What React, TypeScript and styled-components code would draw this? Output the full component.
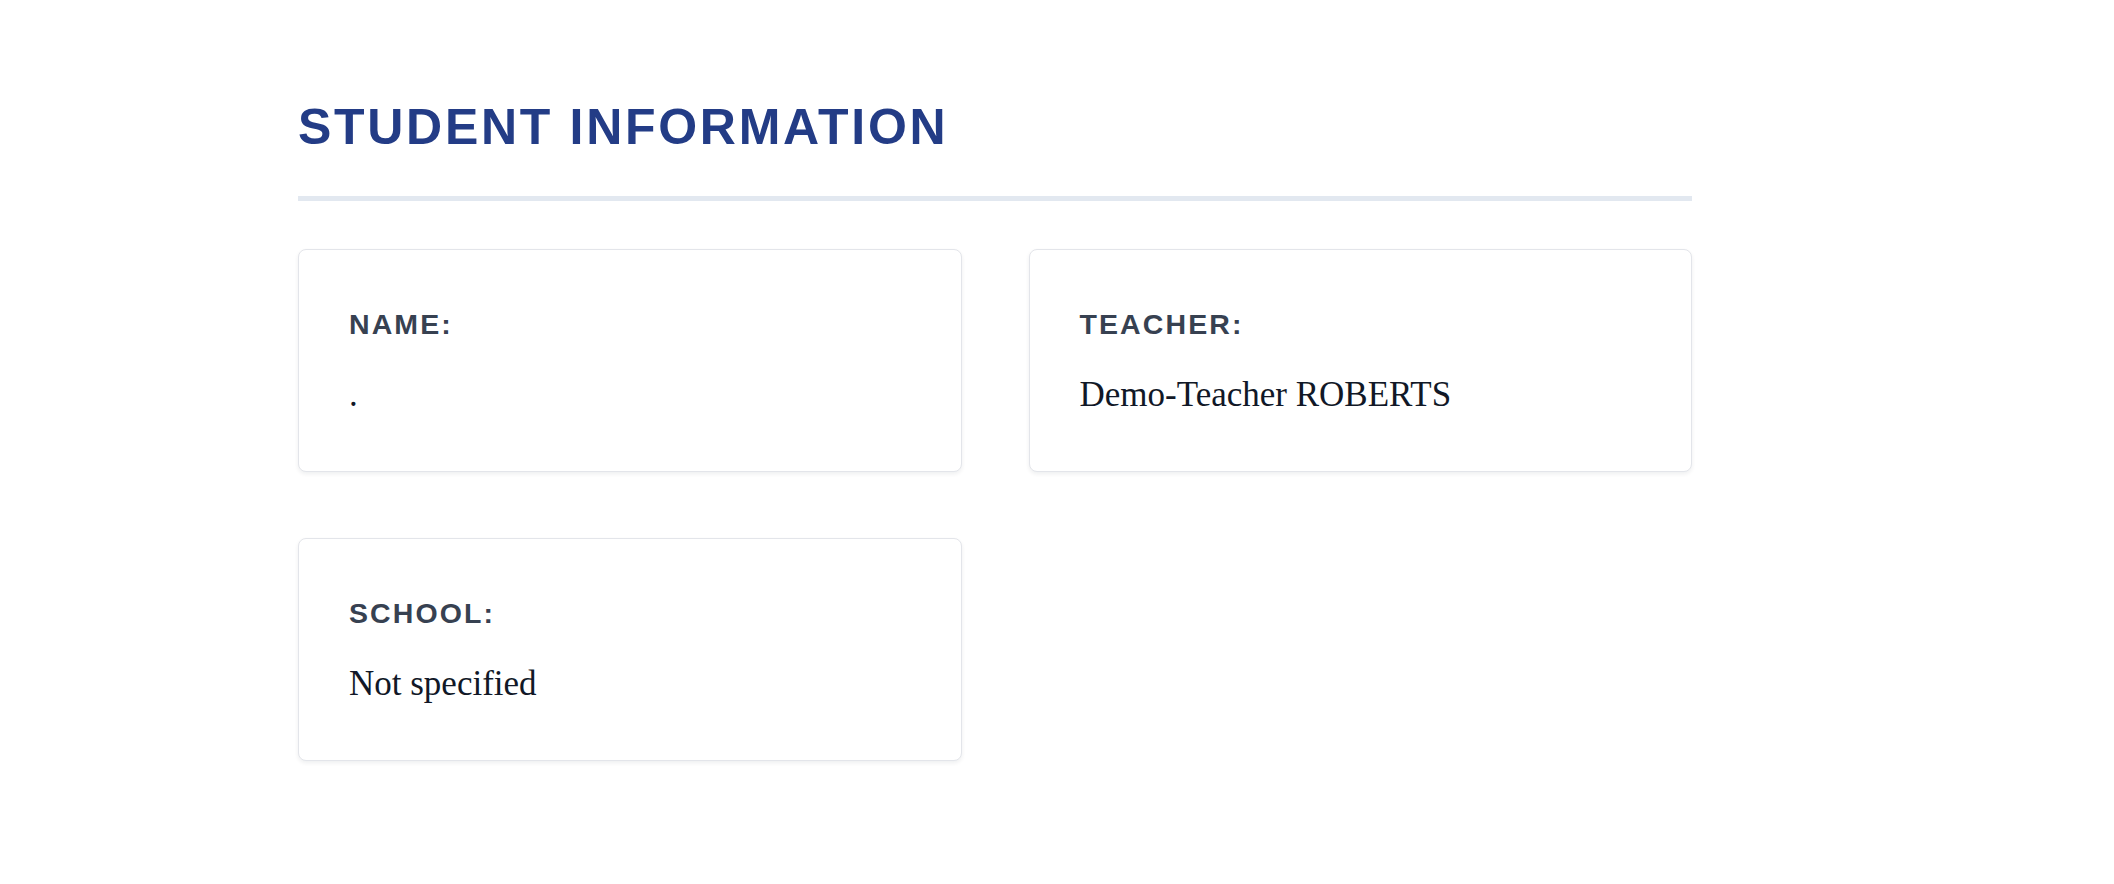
import React from "react";
import styled, { createGlobalStyle } from "styled-components";

const GlobalStyle = createGlobalStyle`
  html, body {
    margin: 0;
    padding: 0;
    background: #ffffff;
  }
  body {
    font-family: "Liberation Serif", "Times New Roman", serif;
  }
`;

const Page = styled.main`
  padding: 98px 0 80px 298px;
`;

const Section = styled.section`
  width: 1394px;
`;

const Title = styled.h1`
  margin: 0 0 48px;
  padding: 0 0 40px;
  border-bottom: 5px solid #e2e8f0;
  font-family: "Liberation Sans", Arial, sans-serif;
  font-size: 50px;
  font-weight: 700;
  letter-spacing: 2.7px;
  line-height: normal;
  color: #233c86;
  text-transform: uppercase;
`;

const Grid = styled.div`
  display: grid;
  grid-template-columns: 1fr 1fr;
  gap: 66px 67px;
`;

const Card = styled.div`
  box-sizing: border-box;
  height: 223px;
  padding: 58px 50px 50px;
  background: #ffffff;
  border: 1px solid #e3e5ea;
  border-radius: 8px;
  box-shadow: 0 2px 4px rgba(15, 23, 42, 0.07);
`;

const Label = styled.div`
  font-family: "Liberation Sans", Arial, sans-serif;
  font-size: 28.5px;
  font-weight: 700;
  letter-spacing: 2.1px;
  line-height: normal;
  color: #374151;
  text-transform: uppercase;
`;

const Value = styled.div`
  margin-top: 34px;
  font-family: "Liberation Serif", "Times New Roman", serif;
  font-size: 35px;
  line-height: normal;
  color: #111827;
`;

const items = [
  { label: "Name:", value: "." },
  { label: "Teacher:", value: "Demo-Teacher ROBERTS" },
  { label: "School:", value: "Not specified" },
];

export default function App() {
  return (
    <>
      <GlobalStyle />
      <Page>
        <Section>
          <Title>Student Information</Title>
          <Grid>
            {items.map((item) => (
              <Card key={item.label}>
                <Label>{item.label}</Label>
                <Value>{item.value}</Value>
              </Card>
            ))}
          </Grid>
        </Section>
      </Page>
    </>
  );
}
